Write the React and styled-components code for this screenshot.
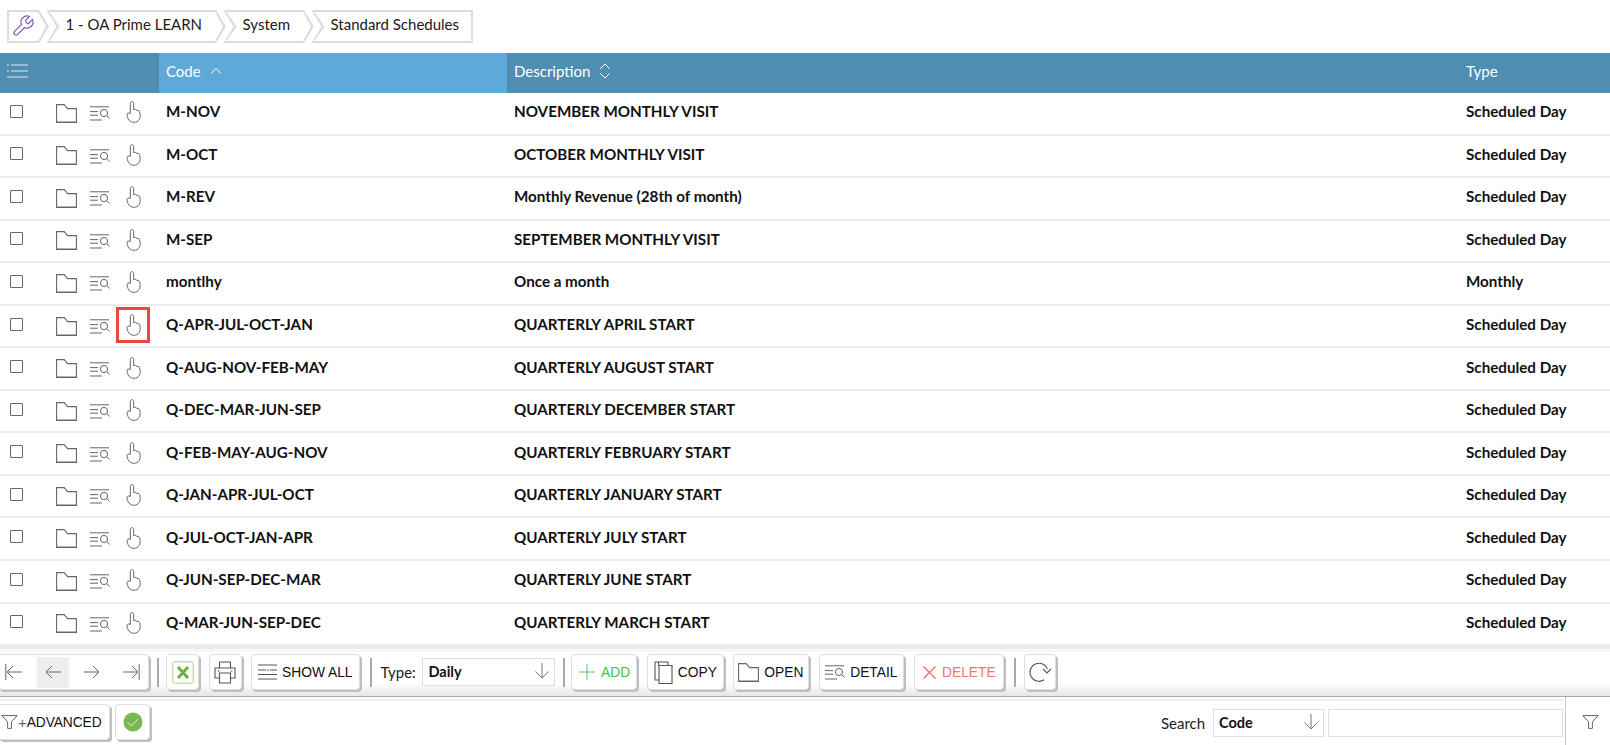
import React from "react";
import styled, { createGlobalStyle } from "styled-components";

const Global = createGlobalStyle`
  html, body { margin: 0; padding: 0; background: #fff; }
  body { font-family: Lato, "Liberation Sans", sans-serif; color: #111; }
`;

const Page = styled.div`
  width: 1610px; height: 745px; overflow: hidden;
  display: flex; flex-direction: column; background: #fff;
`;
const Breadcrumbs = styled.nav`
  display: flex; height: 33px; margin: 10px 0 10px 7px;
`;
const Crumb = styled.div`
  position: relative; height: 33px; box-sizing: border-box;
  display: flex; align-items: center;
  padding: ${p => (p.$first ? "0 14px 2px 4px" : p.$last ? "0 14px 5px 19px" : "0 24px 5px 19px")};
  margin-right: -2.5px;
  background: #dcdcdc; font-size: 15px; color: #1a1a1a;
  clip-path: ${p => p.$last
    ? "polygon(0 0, 100% 0, 100% 100%, 0 100%, 10px 50%)"
    : p.$first
      ? "polygon(0 0, calc(100% - 10px) 0, 100% 50%, calc(100% - 10px) 100%, 0 100%)"
      : "polygon(0 0, calc(100% - 10px) 0, 100% 50%, calc(100% - 10px) 100%, 0 100%, 10px 50%)"};
  &::before {
    content: ""; position: absolute; inset: 0; background: #fff;
    clip-path: ${p => p.$last
      ? "polygon(3px 2px, calc(100% - 2px) 2px, calc(100% - 2px) calc(100% - 2px), 3px calc(100% - 2px), 13px 50%)"
      : p.$first
        ? "polygon(2px 2px, calc(100% - 11px) 2px, calc(100% - 3px) 50%, calc(100% - 11px) calc(100% - 2px), 2px calc(100% - 2px))"
        : "polygon(3px 2px, calc(100% - 11px) 2px, calc(100% - 3px) 50%, calc(100% - 11px) calc(100% - 2px), 3px calc(100% - 2px), 13px 50%)"};
  }
  & > * { position: relative; }
`;
const CrumbText = styled.span``;

const HeaderRow = styled.div`
  display: grid; grid-template-columns: 159px 348px 952px 1fr;
  height: 40px; color: #fff; font-size: 15px; flex: none;
`;
const HeaderCell = styled.div`
  background: ${p => (p.$active ? "#5fa9d8" : "#4f8db3")};
  display: flex; align-items: center; gap: 9px; padding: 0 0 5px 7px;
`;
const Rows = styled.div`
  flex: none; height: 553px; overflow: hidden; border-bottom: 3px solid #e9e9e9;
`;
const Row = styled.div`
  display: grid; grid-template-columns: 159px 348px 952px 1fr;
  height: 42.55px; box-sizing: border-box; border-bottom: 2px solid #ececec;
  font-size: 15.2px; font-weight: 700; color: #111;
`;
const ActionCell = styled.div`
  display: flex; align-items: center; padding: 0 0 1px 10px;
`;
const Checkbox = styled.span`
  width: 13px; height: 13px; box-sizing: border-box; flex: none;
  border: 1.5px solid #666; border-radius: 1px; margin: -3px 33px 0 0;
`;
const FolderSlot = styled.span`
  display: flex; width: 21px; flex: none; margin-right: 13px; margin-top: 1px;
`;
const DetailIconSlot = styled.span`
  display: flex; width: 20px; flex: none; margin-right: 6px; margin-top: 2px;
`;
const HandSlot = styled.span`
  display: flex; align-items: center; justify-content: center;
  width: 34px; height: 36px; box-sizing: border-box; flex: none; margin-top: -1px;
  border: 3px solid ${p => (p.$marked ? "#e8483f" : "transparent")};
`;
const TextCell = styled.div`
  display: flex; align-items: center; padding: 0 0 4px 7px; white-space: nowrap;
`;

const Toolbar = styled.div`
  flex: none; height: 47px; box-sizing: border-box; margin-top: 1px;
  border-top: 1px solid #eee; border-bottom: 1px solid #a9a9a9;
  background: linear-gradient(#fff 70%, #e7e7e7 100%);
  display: flex; align-items: center; padding: 0 0 3px 0;
`;
const ToolButton = styled.div`
  display: flex; align-items: center; box-sizing: border-box;
  height: 36px; width: ${p => p.$w}px; flex: none; justify-content: center; gap: 5px;
  background: #fff; border: 1px solid #dedede; border-radius: 4px;
  box-shadow: 2px 2px 0 #bfbfbf;
  font-family: "Liberation Sans", Arial, sans-serif; font-size: 13.8px; color: ${p => p.$color || "#111"};
  margin-right: ${p => p.$mr ?? 0}px; margin-left: ${p => p.$ml ?? 0}px;
`;
const NavGroup = styled(ToolButton)`
  justify-content: flex-start; gap: 0; padding: 0; overflow: hidden;
`;
const NavItem = styled.span`
  display: flex; align-items: center; justify-content: center;
  width: 32px; height: 31px; margin-right: 7px; flex: none;
  background: ${p => (p.$on ? "#eeeeee" : "transparent")};
  &:first-child { width: 29px; margin-right: 9px; }
`;
const AdvancedButton = styled(ToolButton)`
  justify-content: flex-start; gap: 0; padding-left: 2px; letter-spacing: -0.1px;
`;
const PlusMark = styled.span`
  color: #666; font-size: 15px; margin-right: 0;
`;
const Divider = styled.span`
  width: 2px; height: 29px; background: #a8a8a8; flex: none;
  margin: 0 ${p => p.$r ?? 7}px 0 ${p => p.$l ?? 7}px;
`;
const Label = styled.span`
  font-size: 15px; color: #222; flex: none; width: ${p => p.$w}px;
`;
const Select = styled.div`
  display: flex; align-items: center; justify-content: space-between; box-sizing: border-box; flex: none;
  width: ${p => p.$w}px; height: 28px; border: 1px solid #dedede; padding: 0 4px 2px 5px;
  font-size: 14.5px; font-weight: 700; color: #111;
`;
const BottomRow = styled.div`
  flex: 1; display: flex; align-items: stretch; min-height: 0;
`;
const BottomMain = styled.div`
  flex: 1; display: flex; flex-direction: column; min-width: 0; margin-right: 2px;
`;
const ThinRule = styled.div`
  height: 2px; background: #eee; margin-top: 2px; flex: none;
`;
const BottomControls = styled.div`
  flex: 1; display: flex; align-items: flex-start; padding-top: 3px;
`;
const SearchArea = styled.div`
  margin-left: auto; display: flex; align-items: center; padding-top: 5px;
`;
const SearchInput = styled.div`
  width: 235px; height: 28px; box-sizing: border-box; border: 1px solid #dedede; margin-left: 4px;
`;
const FilterCell = styled.div`
  width: 45px; flex: none; border-left: 1px solid #c9c9c9;
  display: flex; justify-content: center; padding: 18px 0 0 5px; box-sizing: border-box;
`;

const Ico = ({ w, h, children, vb, sw = 1, stroke = "#666" }) => (
  <svg width={w} height={h} viewBox={vb || `0 0 ${w} ${h}`} fill="none" stroke={stroke} strokeWidth={sw} style={{ flex: "none" }}>
    {children}
  </svg>
);
const Folder = () => (
  <Ico w={21} h={19} sw={1.1}>
    <path d="M.6 18.4V.6h7.6l3.4 4h8.8v13.8z" />
    <path d="M.6 18.4h19.8" strokeWidth="1.4" />
  </Ico>
);
const DetailIcon = () => (
  <Ico w={20} h={15} sw={1}>
    <path d="M0 .8h19M0 5.6h8M0 9.2h8M0 14h12" />
    <circle cx="14" cy="7" r="3.6" />
    <path d="M16.6 9.6l3 2.8" />
  </Ico>
);
const Hand = () => (
  <Ico w={15} h={22} sw={1}>
    <path d="M4.3 12.4V2.6c0-2.6 3.4-2.6 3.4 0v6.2c1.4-.9 3-.4 3.2.7 1.5-.4 2.8.3 2.9 1.7.6 3.6.5 5.4-.6 7.2-1.2 2-3 3-5.4 2.9-2.9-.1-4.6-1.4-5.7-3.7-.8-1.7-1.1-3-1.1-4.2 0-1 1-2 3.3-1z" />
  </Ico>
);
const Lines = () => (
  <Ico w={19} h={16} sw={1} stroke="#555">
    <path d="M0 1h19M0 6h8M9 6h2M12 6h7M0 10.5h19M0 15h19" />
  </Ico>
);
const Arrow = ({ dir, bar }) => {
  const t = { left: "", right: "rotate(180 9 9)" }[dir];
  return (
    <Ico w={18} h={18} sw={1} stroke="#666">
      <g transform={t}>
        <path d="M17 9H2M8 3L2 9l6 6" />
        {bar && <path d="M.8 1v16" />}
      </g>
    </Ico>
  );
};
const DownArrow = () => (
  <Ico w={16} h={16} sw={1} stroke="#777">
    <path d="M8 0v15M1.5 8.5L8 15l6.5-6.5" />
  </Ico>
);
const Funnel = () => (
  <Ico w={17} h={14} sw={1}>
    <path d="M.8.6h15.4l-5.8 6.2v6.6H6.6V6.8z" />
  </Ico>
);

const data = [
  ["M-NOV", "NOVEMBER MONTHLY VISIT", "Scheduled Day"],
  ["M-OCT", "OCTOBER MONTHLY VISIT", "Scheduled Day"],
  ["M-REV", "Monthly Revenue (28th of month)", "Scheduled Day"],
  ["M-SEP", "SEPTEMBER MONTHLY VISIT", "Scheduled Day"],
  ["montlhy", "Once a month", "Monthly"],
  ["Q-APR-JUL-OCT-JAN", "QUARTERLY APRIL START", "Scheduled Day"],
  ["Q-AUG-NOV-FEB-MAY", "QUARTERLY AUGUST START", "Scheduled Day"],
  ["Q-DEC-MAR-JUN-SEP", "QUARTERLY DECEMBER START", "Scheduled Day"],
  ["Q-FEB-MAY-AUG-NOV", "QUARTERLY FEBRUARY START", "Scheduled Day"],
  ["Q-JAN-APR-JUL-OCT", "QUARTERLY JANUARY START", "Scheduled Day"],
  ["Q-JUL-OCT-JAN-APR", "QUARTERLY JULY START", "Scheduled Day"],
  ["Q-JUN-SEP-DEC-MAR", "QUARTERLY JUNE START", "Scheduled Day"],
  ["Q-MAR-JUN-SEP-DEC", "QUARTERLY MARCH START", "Scheduled Day"],
];

export default function App() {
  return (
    <Page>
      <Global />
      <Breadcrumbs>
        <Crumb $first>
          <svg width="24" height="24" viewBox="0 0 24 24" fill="none" stroke="#7a5fc0" strokeWidth="1.2">
            <path d="M14.7 6.3a1 1 0 0 0 0 1.4l1.6 1.6a1 1 0 0 0 1.4 0l3.77-3.77a6 6 0 0 1-7.94 7.94l-6.91 6.91a2.12 2.12 0 0 1-3-3l6.91-6.91a6 6 0 0 1 7.94-7.94l-3.76 3.76z" />
          </svg>
        </Crumb>
        <Crumb><CrumbText>1 - OA Prime LEARN</CrumbText></Crumb>
        <Crumb><CrumbText>System</CrumbText></Crumb>
        <Crumb $last><CrumbText>Standard Schedules</CrumbText></Crumb>
      </Breadcrumbs>
      <HeaderRow>
        <HeaderCell>
          <Ico w={21} h={14} sw={1} stroke="#dbe9f2">
            <path d="M0 1h2M4 1h17M0 7h2M4 7h17M0 13h21" />
          </Ico>
        </HeaderCell>
        <HeaderCell $active>
          Code
          <Ico w={12} h={8} sw={1} stroke="#fff"><path d="M1 6.5l5-5 5 5" /></Ico>
        </HeaderCell>
        <HeaderCell>
          Description
          <Ico w={12} h={16} sw={1} stroke="#fff"><path d="M1 6l5-5 5 5M1 10l5 5 5-5" /></Ico>
        </HeaderCell>
        <HeaderCell>Type</HeaderCell>
      </HeaderRow>
      <Rows>
        {data.map((r, i) => (
          <Row key={r[0]}>
            <ActionCell>
              <Checkbox />
              <FolderSlot><Folder /></FolderSlot>
              <DetailIconSlot><DetailIcon /></DetailIconSlot>
              <HandSlot $marked={i === 5}><Hand /></HandSlot>
            </ActionCell>
            <TextCell>{r[0]}</TextCell>
            <TextCell>{r[1]}</TextCell>
            <TextCell>{r[2]}</TextCell>
          </Row>
        ))}
      </Rows>
      <Toolbar>
        <NavGroup $w={150.5} $ml={-2}>
          <NavItem><Arrow dir="left" bar /></NavItem>
          <NavItem $on><Arrow dir="left" /></NavItem>
          <NavItem><Arrow dir="right" /></NavItem>
          <NavItem><Arrow dir="right" bar /></NavItem>
        </NavGroup>
        <Divider $l={8} $r={7.5} />
        <ToolButton $w={33} $mr={9.7}>
          <svg width="22" height="23" viewBox="0 0 22 23">
            <rect x=".8" y=".8" width="20.4" height="21.4" rx="2" fill="#fff" stroke="#a9d18e" />
            <path d="M6 6l10 11M16 6L6 17" stroke="#6fb040" strokeWidth="3" />
          </svg>
        </ToolButton>
        <ToolButton $w={33} $mr={9.3}>
          <Ico w={22} h={23} sw={1.1} stroke="#555">
            <path d="M5.5 7V1h11v6M5 17H1V7h20v10h-4" />
            <path d="M5.5 12h11v10h-11zM3.5 10h2M16.5 10h2" />
          </Ico>
        </ToolButton>
        <ToolButton $w={108.6}><Lines />SHOW ALL</ToolButton>
        <Divider $l={10.4} $r={8.5} />
        <Label $w={42}>Type:</Label>
        <Select $w={132.5}>Daily<DownArrow /></Select>
        <Divider $l={8} $r={6.2} />
        <ToolButton $w={66} $mr={10} $color="#4cb848">
          <Ico w={18} h={18} sw={1} stroke="#63c05c"><path d="M9 1v16M1 9h16" /></Ico>ADD
        </ToolButton>
        <ToolButton $w={76.5} $mr={9.2}>
          <Ico w={19} h={23} sw={1.1} stroke="#555">
            <path d="M4.5 4.5V1H14v3.5M1 1h4M1 1v18h4" />
            <path d="M5 4.5h13v18H5z" />
          </Ico>COPY
        </ToolButton>
        <ToolButton $w={76} $mr={10}><Folder />OPEN</ToolButton>
        <ToolButton $w={85} $mr={10}><DetailIcon />DETAIL</ToolButton>
        <ToolButton $w={90} $color="#f07470">
          <Ico w={15} h={15} sw={1.1} stroke="#f0625c"><path d="M1.5 1.5l12 12M13.5 1.5l-12 12" /></Ico>DELETE
        </ToolButton>
        <Divider $l={10.4} $r={7.5} />
        <ToolButton $w={32.5}>
          <Ico w={24} h={22} sw={1.1} stroke="#555">
            <path d="M20 12a9 9 0 1 1-4.5-8.5 9 9 0 0 1 4.5 8.5z" strokeDasharray="44 14" strokeDashoffset="-8" />
            <path d="M23 8l-4 4-4-4" />
          </Ico>
        </ToolButton>
      </Toolbar>
      <BottomRow>
        <BottomMain>
          <ThinRule />
          <BottomControls>
            <AdvancedButton $w={112} $ml={-2} $mr={5}>
              <Funnel /><PlusMark>+</PlusMark><span>ADVANCED</span>
            </AdvancedButton>
            <ToolButton $w={35}>
              <svg width="20" height="20" viewBox="0 0 20 20">
                <circle cx="10" cy="10" r="9.5" fill="#7cb850" />
                <path d="M5 10.5l3.5 3.5L15 7" fill="none" stroke="#e6f2dc" strokeWidth="1" />
              </svg>
            </ToolButton>
            <SearchArea>
              <Label $w={52}>Search</Label>
              <Select $w={111}>Code<DownArrow /></Select>
              <SearchInput />
            </SearchArea>
          </BottomControls>
        </BottomMain>
        <FilterCell><Funnel /></FilterCell>
      </BottomRow>
    </Page>
  );
}
